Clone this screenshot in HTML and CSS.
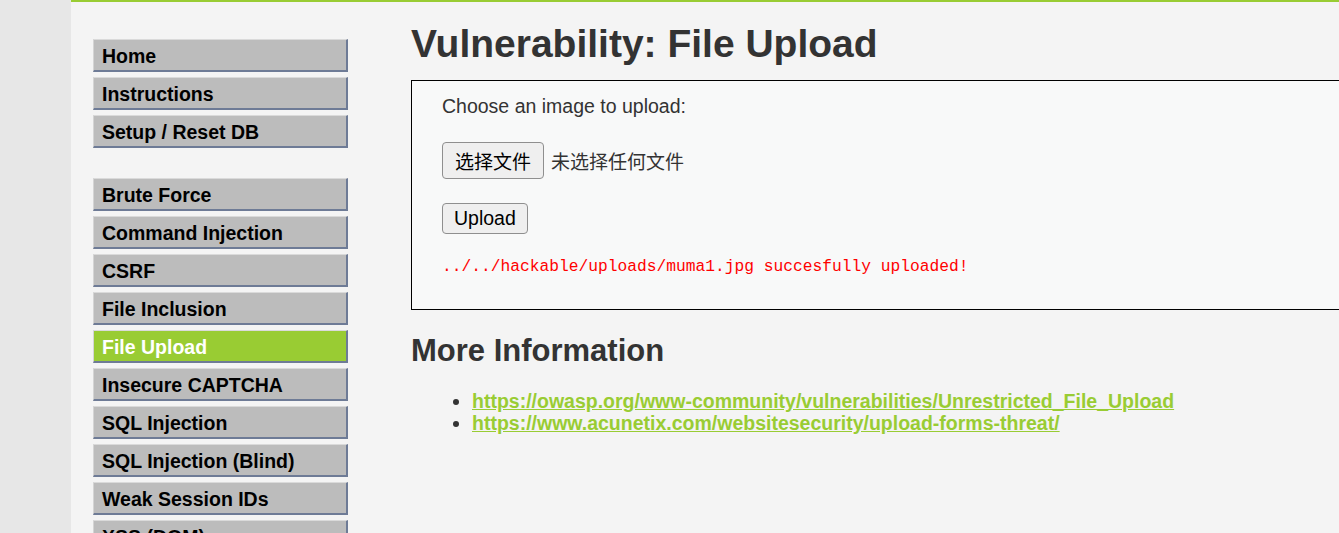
FILE: index.html
```html
<!DOCTYPE html>
<html lang="en">
<head>
<meta charset="utf-8">
<title>Vulnerability: File Upload</title>
<link rel="stylesheet" href="styles.css">
</head>
<body>
<div class="container">
  <nav class="menu">
    <ul class="menu-group">
      <li class="menu-item">Home</li>
      <li class="menu-item">Instructions</li>
      <li class="menu-item">Setup / Reset DB</li>
    </ul>
    <ul class="menu-group">
      <li class="menu-item">Brute Force</li>
      <li class="menu-item">Command Injection</li>
      <li class="menu-item">CSRF</li>
      <li class="menu-item">File Inclusion</li>
      <li class="menu-item selected">File Upload</li>
      <li class="menu-item">Insecure CAPTCHA</li>
      <li class="menu-item">SQL Injection</li>
      <li class="menu-item">SQL Injection (Blind)</li>
      <li class="menu-item">Weak Session IDs</li>
      <li class="menu-item">XSS (DOM)</li>
      <li class="menu-item">XSS (Reflected)</li>
      <li class="menu-item">XSS (Stored)</li>
    </ul>
  </nav>
  <main class="content">
    <h1 class="title">Vulnerability: File Upload</h1>
    <div class="code-area">
      <p class="prompt">Choose an image to upload:</p>
      <div class="file-row">
        <button class="file-btn" type="button">选择文件</button>
        <span class="file-name">未选择任何文件</span>
      </div>
      <div class="upload-row">
        <button class="upload-btn" type="button">Upload</button>
      </div>
      <pre class="result">../../hackable/uploads/muma1.jpg succesfully uploaded!</pre>
    </div>
    <h2 class="subtitle">More Information</h2>
    <ul class="links">
      <li><a href="#">https://owasp.org/www-community/vulnerabilities/Unrestricted_File_Upload</a></li>
      <li><a href="#">https://www.acunetix.com/websitesecurity/upload-forms-threat/</a></li>
    </ul>
  </main>
</div>
</body>
</html>
```

FILE: styles.css
```css
html, body {
  margin: 0;
  padding: 0;
  height: 100%;
  overflow: hidden;
}

body {
  background: #e7e7e7;
  font-family: "Liberation Sans", Arial, sans-serif;
  font-size: 19.5px;
  color: #333;
}

.container {
  margin-left: 71px;
  min-height: 100%;
  background: #f4f4f4;
  border-top: 2px solid #9c3;
  display: flex;
  align-items: flex-start;
}

.menu {
  width: 255px;
  flex: none;
  padding: 37px 0 0 22px;
}

.menu-group {
  list-style: none;
  margin: 0 0 30px 0;
  padding: 0;
  display: flex;
  flex-direction: column;
  gap: 5px;
}

.menu-item {
  background: #bcbcbc;
  color: #000;
  font-weight: bold;
  font-size: 19.5px;
  line-height: 22px;
  padding: 5px 0 3px 8px;
  border-top: 1px solid #dadada;
  border-left: 1px solid #d4d4d4;
  border-right: 2px solid #6e7b96;
  border-bottom: 2px solid #6e7b96;
  white-space: nowrap;
}

.menu-item.selected {
  background: #9c3;
  color: #fff;
}

.content {
  flex: none;
  margin-left: 63px;
  width: 1000px;
}

.title {
  margin: 19px 0 14px 0;
  font-size: 39px;
  line-height: 45px;
  font-weight: bold;
  color: #333;
}

.code-area {
  background: #f8f9f9;
  border: 1px solid #000;
  padding: 14px 30px 33px 30px;
}

.prompt {
  margin: 0;
  line-height: 22px;
}

.file-row {
  margin-top: 25px;
  display: flex;
  align-items: center;
  gap: 7px;
}

.file-btn {
  height: 37px;
  padding: 0 12px;
  font-family: "Noto Sans CJK SC", sans-serif;
  font-size: 19px;
  color: #000;
  background: #efefef;
  border: 1px solid #8f8f8f;
  border-radius: 4px;
}

.file-name {
  font-family: "Noto Sans CJK SC", sans-serif;
  font-size: 19px;
  color: #333;
}

.upload-row {
  margin-top: 24px;
  display: flex;
}

.upload-btn {
  height: 31px;
  padding: 0 11px;
  font-family: "Liberation Sans", Arial, sans-serif;
  font-size: 19.5px;
  color: #000;
  background: #efefef;
  border: 1px solid #8f8f8f;
  border-radius: 4px;
}

.result {
  margin: 24px 0 0 0;
  font-family: "Liberation Mono", monospace;
  font-size: 16.25px;
  line-height: 18px;
  color: #f00;
}

.subtitle {
  margin: 23px 0 0 0;
  font-size: 31px;
  line-height: 36px;
  font-weight: bold;
  color: #333;
}

.links {
  margin: 21px 0 0 0;
  padding-left: 61px;
  line-height: 22px;
}

.links a {
  color: #9c3;
  font-weight: bold;
  text-decoration: underline;
}
```
